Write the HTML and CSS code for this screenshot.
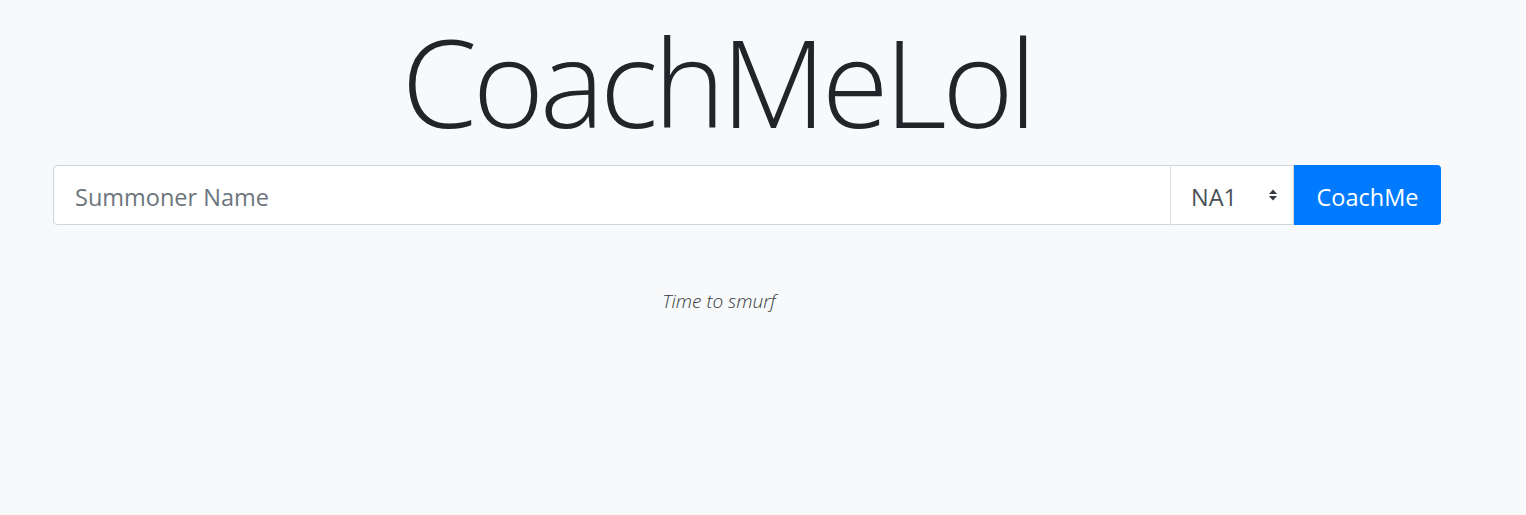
FILE: index.html
```html
<!DOCTYPE html>
<html>
<head>
<meta charset="utf-8">
<link rel="stylesheet" href="styles.css">
</head>
<body>
<div class="page">
  <h1 class="title">CoachMeLol</h1>
  <form class="search">
    <input class="name" type="text" placeholder="Summoner Name">
    <div class="region">
      <span>NA1</span>
      <svg class="arrows" width="10" height="14" viewBox="0 0 10 14"><path d="M1 6 L5 1.5 L9 6 Z M1 8 L5 12.5 L9 8 Z" fill="#343a40"/></svg>
    </div>
    <button class="go" type="button">CoachMe</button>
  </form>
  <p class="tag">Time to smurf</p>
</div>
</body>
</html>
```
FILE: styles.css
```css
html, body {
  margin: 0;
  padding: 0;
  background: #f8f9fa;
  height: 100%;
}
body {
  font-family: "Open Sans", "Noto Sans", sans-serif;
  color: #212529;
}
.page {
  display: flex;
  flex-direction: column;
  padding-top: 8px;
}
.title {
  margin: 0;
  width: 1434px;
  text-align: center;
  font-weight: 300;
  font-size: 122px;
  line-height: 146px;
  letter-spacing: -4.5px;
  color: #212529;
}
.search {
  display: flex;
  margin: 11px 0 0 53px;
  width: 1388px;
  height: 60px;
}
.name {
  flex: 1;
  height: 60px;
  box-sizing: border-box;
  border: 1px solid #ced4da;
  border-radius: 4px 0 0 4px;
  background: #fff;
  padding: 3px 21px 0;
  font-family: inherit;
  font-size: 23.5px;
  color: #495057;
  outline: none;
  margin: 0;
}
.name::placeholder {
  color: #6c757d;
}
.region {
  width: 124px;
  box-sizing: border-box;
  border: 1px solid #ced4da;
  border-left: 1px solid #dee2e6;
  background: #fff;
  display: flex;
  align-items: center;
  justify-content: space-between;
  padding: 3px 15px 0 20px;
  font-size: 23.5px;
  color: #495057;
  margin-left: -1px;
  border-radius: 0;
}
.arrows {
  display: block;
  margin-top: -3px;
}
.go {
  width: 147px;
  height: 60px;
  border: none;
  background: #007bff;
  color: #fff;
  border-radius: 0 4px 4px 0;
  font-family: inherit;
  font-size: 23.5px;
  padding: 3px 0 0;
  margin: 0;
}
.tag {
  margin: 63px 0 0 0;
  width: 1438px;
  text-align: center;
  font-style: italic;
  font-weight: 300;
  font-size: 19px;
  color: #343a40;
}
```
